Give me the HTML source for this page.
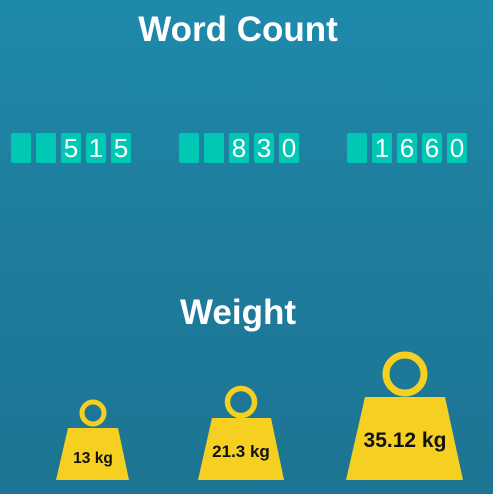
<!DOCTYPE html>
<html><head><style>
html,body{margin:0;padding:0}
body{width:493px;height:494px;overflow:hidden;position:relative;background:linear-gradient(180deg,#1e8aab 0%,#1f7c9c 50%,#1d7493 100%);font-family:"Liberation Sans",sans-serif}
.t{position:absolute;left:0;width:476px;text-align:center;color:#fff;font-weight:bold;font-size:35px}
.b{position:absolute;top:133px;width:20px;height:30px;background:#00c8b5;border-radius:2px;color:#fff;font-size:26px;text-align:center;line-height:31px}
</style></head><body>
<div class="t" style="top:10px">Word Count</div>
<div class="t" style="top:293px">Weight</div>
<div class="b" style="left:11px"></div><div class="b" style="left:36px"></div><div class="b" style="left:61px">5</div><div class="b" style="left:86px">1</div><div class="b" style="left:111px">5</div>
<div class="b" style="left:179px"></div><div class="b" style="left:204px"></div><div class="b" style="left:229px">8</div><div class="b" style="left:254px">3</div><div class="b" style="left:279px">0</div>
<div class="b" style="left:347px"></div><div class="b" style="left:372px">1</div><div class="b" style="left:397px">6</div><div class="b" style="left:422px">6</div><div class="b" style="left:447px">0</div>
<svg width="493" height="494" style="position:absolute;left:0;top:0" font-family="Liberation Sans, sans-serif" font-weight="bold" text-anchor="middle">
<g fill="#f6d021" stroke="#f6d021">
<circle cx="93" cy="413" r="11" fill="none" stroke-width="5"/>
<polygon points="68,428 118,428 129,480 56,480" stroke="none"/>
<circle cx="241" cy="402" r="13.5" fill="none" stroke-width="5.5"/>
<polygon points="212,418 271,418 284,480 198,480" stroke="none"/>
<circle cx="405" cy="374" r="19" fill="none" stroke-width="7"/>
<polygon points="365,397 445,397 463,480 346,480" stroke="none"/>
</g>
<g fill="#111">
<text x="93" y="463" font-size="15.5">13 kg</text>
<text x="241" y="457" font-size="17">21.3 kg</text>
<text x="405" y="447" font-size="21">35.12 kg</text>
</g>
</svg>
</body></html>
